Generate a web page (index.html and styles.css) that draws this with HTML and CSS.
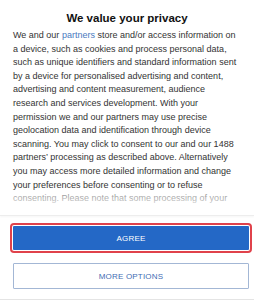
FILE: index.html
```html
<!DOCTYPE html>
<html>
<head>
<meta charset="utf-8">
<link rel="stylesheet" href="styles.css">
</head>
<body>
<div class="dialog">
  <div class="content">
    <h1 class="title">We value your privacy</h1>
    <p class="text">We and our <a class="link" href="#">partners</a> store and/or access information on a device, such as cookies and process personal data, such as unique identifiers and standard information sent by a device for personalised advertising and content, advertising and content measurement, audience research and services development. With your permission we and our partners may use precise geolocation data and identification through device scanning. You may click to consent to our and our 1488 partners’ processing as described above. Alternatively you may access more detailed information and change your preferences before consenting or to refuse consenting. Please note that some processing of your</p>
    <div class="fade"></div>
  </div>
  <div class="actions">
    <button class="btn btn-agree">AGREE</button>
    <button class="btn btn-more">MORE OPTIONS</button>
  </div>
</div>
</body>
</html>
```

FILE: styles.css
```css
html, body {
  margin: 0;
  padding: 0;
  background: #fff;
}
body {
  font-family: "Liberation Sans", Arial, sans-serif;
  color: #333;
}
.dialog {
  width: 254px;
  height: 300px;
  display: flex;
  flex-direction: column;
  border-bottom: 1px solid #e4e4e4;
  box-sizing: border-box;
}
.content {
  position: relative;
  flex: 1;
  overflow: hidden;
  padding: 11px 13px 0;
  border-bottom: 1px solid #ededed;
  box-shadow: 0 1px 2px rgba(0,0,0,0.04);
}
.title {
  margin: 0 0 4px;
  text-align: center;
  font-size: 11.5px;
  line-height: 14px;
  font-weight: bold;
  color: #111;
}
.text {
  margin: 0;
  font-size: 9px;
  line-height: 13.6px;
  color: #333;
}
.link {
  color: #4a7ac0;
  text-decoration: none;
}
.fade {
  position: absolute;
  left: 0;
  right: 0;
  bottom: 0;
  height: 22px;
  background: linear-gradient(rgba(255,255,255,0.45), #fff 85%);
}
.actions {
  display: flex;
  flex-direction: column;
  gap: 13px;
  padding: 10px 5px 10px 13px;
}
.btn {
  display: block;
  font-family: "Liberation Sans", Arial, sans-serif;
  font-size: 8px;
  letter-spacing: 0.2px;
  border-radius: 1px;
  cursor: pointer;
  padding: 0;
}
.btn-agree {
  height: 24px;
  background: #2468c6;
  color: #fff;
  border: none;
  outline: 2px solid #e0424b;
  outline-offset: 1px;
}
.btn-more {
  height: 26px;
  background: #fff;
  color: #3f6db4;
  border: 1px solid #a3b7d5;
}
```
